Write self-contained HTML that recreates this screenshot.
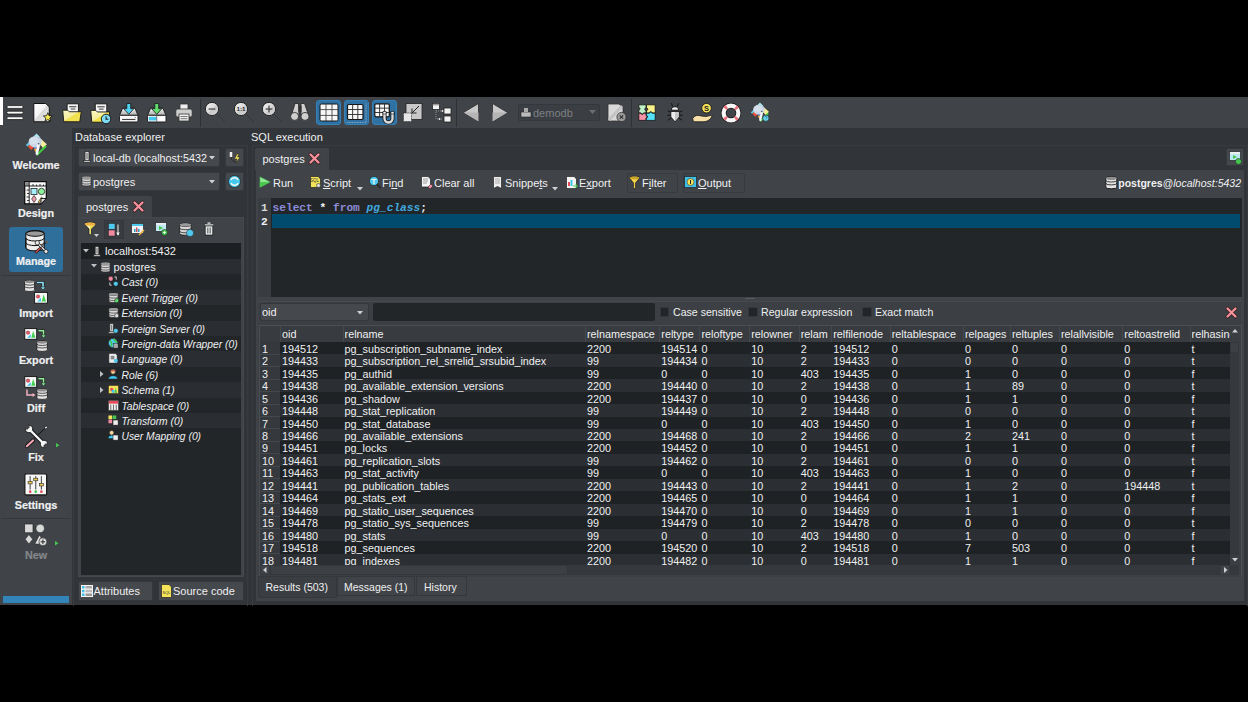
<!DOCTYPE html>
<html><head><meta charset="utf-8">
<style>
*{margin:0;padding:0;box-sizing:border-box}
html,body{width:1248px;height:702px;overflow:hidden;background:#000;font-family:"Liberation Sans",sans-serif;color:#eff0f1}
.abs{position:absolute}
.t{position:absolute;white-space:nowrap}
.c{position:absolute;white-space:nowrap;font-size:10.8px;line-height:12.47px}
.ic{position:absolute;overflow:visible}
.sb{position:absolute;left:0;width:72px;text-align:center;font-weight:bold;font-size:10.8px;line-height:13px;-webkit-text-stroke:0.2px currentColor}
.mono{position:absolute;font-family:"Liberation Mono",monospace;font-weight:bold;font-size:11.2px}
u{text-decoration:underline;text-underline-offset:1px}
</style></head><body>
<div class="abs" style="left:0px;top:97px;width:1248px;height:508px;background:#313438"></div>
<div class="abs" style="left:0px;top:97px;width:1248px;height:31px;background:#404347"></div>
<div class="abs" style="left:0px;top:97px;width:3px;height:28px;background:#fff"></div>
<svg class="ic" style="left:6px;top:104px" width="18" height="16" viewBox="0 0 18 16" ><rect x="0.8" y="1.6" width="16.4" height="2.8" rx="1.4" fill="#fafafa" stroke="#151515" stroke-width="0.8"/><rect x="0.8" y="7.2" width="16.4" height="2.8" rx="1.4" fill="#fafafa" stroke="#151515" stroke-width="0.8"/><rect x="0.8" y="12.8" width="16.4" height="2.8" rx="1.4" fill="#fafafa" stroke="#151515" stroke-width="0.8"/></svg>
<svg class="ic" style="left:33px;top:102.5px" width="20" height="20" viewBox="0 0 20 20" ><defs><linearGradient id="g1" x1="0" y1="0" x2="1" y2="1"><stop offset="0" stop-color="#ffffff"/><stop offset="0.45" stop-color="#f4f4f4"/><stop offset="0.5" stop-color="#d8d8d8"/><stop offset="1" stop-color="#eeeeee"/></linearGradient></defs><path d="M0.8 0.5 H12.8 L16.3 4 V18.8 H0.8 Z" fill="url(#g1)" stroke="#111" stroke-width="1" stroke-linejoin="round"/><path d="M14.80 9.70 L16.03 12.70 L19.27 12.95 L16.80 15.05 L17.56 18.20 L14.80 16.50 L12.04 18.20 L12.80 15.05 L10.33 12.95 L13.57 12.70 Z" fill="#f5ea50" stroke="#111" stroke-width="0.8" stroke-linejoin="round"/></svg>
<svg class="ic" style="left:61.5px;top:102.5px" width="20" height="19.5" viewBox="0 0 19.5 19" ><defs><linearGradient id="g2" x1="0" y1="0" x2="1" y2="1"><stop offset="0" stop-color="#fbf8c8"/><stop offset="0.5" stop-color="#f5ec9a"/><stop offset="0.52" stop-color="#f0e04a"/><stop offset="1" stop-color="#f4e35a"/></linearGradient></defs><rect x="5" y="0.8" width="11" height="9" fill="#f6f6f6" stroke="#1a1a1a" stroke-width="0.9"/><rect x="7" y="3" width="7" height="1.2" fill="#555"/><rect x="8.5" y="5.3" width="4.5" height="1.1" fill="#555"/><path d="M0.7 7 H5.5 L7 8.5 H18.8 L17.3 18.3 H1.7 Z" fill="url(#g2)" stroke="#1a1a1a" stroke-width="0.9" stroke-linejoin="round"/></svg>
<svg class="ic" style="left:89.5px;top:102.5px" width="21" height="20.5" viewBox="0 0 20 19.5" ><defs><linearGradient id="g3" x1="0" y1="0" x2="1" y2="1"><stop offset="0" stop-color="#fbf8c8"/><stop offset="0.5" stop-color="#f5ec9a"/><stop offset="0.52" stop-color="#f0e04a"/><stop offset="1" stop-color="#f4e35a"/></linearGradient></defs><rect x="5" y="0.8" width="11" height="9" fill="#f6f6f6" stroke="#1a1a1a" stroke-width="0.9"/><rect x="7" y="3" width="7" height="1.2" fill="#555"/><rect x="8.5" y="5.3" width="4.5" height="1.1" fill="#555"/><path d="M0.7 7 H5.5 L7 8.5 H18.8 L17.3 18.3 H1.7 Z" fill="url(#g3)" stroke="#1a1a1a" stroke-width="0.9" stroke-linejoin="round"/><circle cx="15.3" cy="15.2" r="4.5" fill="#7fdcf6" stroke="#1a1a1a" stroke-width="0.9"/><path d="M15.3 12.5 V15.5 H17.5" stroke="#1a1a1a" stroke-width="1" fill="none"/></svg>
<svg class="ic" style="left:118.5px;top:102.5px" width="19.5" height="19.5" viewBox="0 0 19 19" ><defs><linearGradient id="g4" x1="0" y1="0" x2="0" y2="1"><stop offset="0" stop-color="#f4f4f4"/><stop offset="1" stop-color="#b0b0b0"/></linearGradient></defs><path d="M3.5 5 H15.5 L18.5 12 H0.5 Z" fill="url(#g4)" stroke="#1a1a1a" stroke-width="0.9" stroke-linejoin="round"/><rect x="0.5" y="12" width="18" height="6.5" rx="1" fill="#f8f8f8" stroke="#1a1a1a" stroke-width="0.9"/><rect x="3" y="15.5" width="13" height="1.1" fill="#444"/><circle cx="15.8" cy="13.8" r="0.5" fill="#444"/><path d="M7.6 0.5 H11.4 V5.5 H14.5 L9.5 11 L4.5 5.5 H7.6 Z" fill="#52d2f2" stroke="#1a1a1a" stroke-width="0.8" stroke-linejoin="round"/></svg>
<svg class="ic" style="left:146.5px;top:102.5px" width="19.5" height="19.5" viewBox="0 0 19 19" ><defs><linearGradient id="g5" x1="0" y1="0" x2="0" y2="1"><stop offset="0" stop-color="#f4f4f4"/><stop offset="1" stop-color="#b0b0b0"/></linearGradient></defs><path d="M3.5 5 H15.5 L18.5 12 H0.5 Z" fill="url(#g5)" stroke="#1a1a1a" stroke-width="0.9" stroke-linejoin="round"/><rect x="0.5" y="12" width="18" height="6.5" rx="1" fill="#f8f8f8" stroke="#1a1a1a" stroke-width="0.9"/><rect x="1.8" y="13.5" width="7.5" height="3.5" fill="#45c8ee"/><rect x="9.8" y="13.5" width="7.5" height="3.5" fill="#fff"/><path d="M9.5 12.5 V18" stroke="#333" stroke-width="0.6"/><path d="M7.6 0.5 H11.4 V5.5 H14.5 L9.5 11 L4.5 5.5 H7.6 Z" fill="#62dc6e" stroke="#1a1a1a" stroke-width="0.8" stroke-linejoin="round"/></svg>
<svg class="ic" style="left:175px;top:103px" width="18" height="19" viewBox="0 0 18 19" ><rect x="5" y="1" width="8" height="6" fill="#eee" stroke="#333" stroke-width="0.8"/><rect x="0.8" y="6" width="16.4" height="8" rx="2" fill="#cfcfcf" stroke="#333" stroke-width="0.8"/><rect x="4" y="11" width="10" height="7" fill="#f0f0f0" stroke="#333" stroke-width="0.8"/><rect x="5.5" y="13" width="7" height="1" fill="#777"/><rect x="5.5" y="15.2" width="7" height="1" fill="#777"/></svg>
<div class="abs" style="left:200px;top:99px;width:1px;height:28px;background:#2f3235"></div>
<svg class="ic" style="left:205.4px;top:102.4px" width="21" height="21" viewBox="0 0 21 21" ><defs><linearGradient id="g6" x1="0" y1="0" x2="1" y2="1"><stop offset="0" stop-color="#f2f2f2"/><stop offset="0.5" stop-color="#dadada"/><stop offset="0.52" stop-color="#c8c8c8"/><stop offset="1" stop-color="#d8d8d8"/></linearGradient></defs><path d="M12 12 L20 20" stroke="#34373a" stroke-width="1"/><circle cx="7" cy="7" r="6.6" fill="url(#g6)" stroke="#1c1c1c" stroke-width="0.9"/><rect x="3.6" y="6.5" width="6.8" height="1.1" fill="#333"/></svg>
<svg class="ic" style="left:233.5px;top:102.4px" width="21" height="21" viewBox="0 0 21 21" ><defs><linearGradient id="g7" x1="0" y1="0" x2="1" y2="1"><stop offset="0" stop-color="#f2f2f2"/><stop offset="0.5" stop-color="#dadada"/><stop offset="0.52" stop-color="#c8c8c8"/><stop offset="1" stop-color="#d8d8d8"/></linearGradient></defs><path d="M12 12 L20 20" stroke="#34373a" stroke-width="1"/><circle cx="7" cy="7" r="6.6" fill="url(#g7)" stroke="#1c1c1c" stroke-width="0.9"/><text x="7" y="9.2" font-family="Liberation Sans" font-weight="bold" font-size="6.2" text-anchor="middle" fill="#2a2a2a">1:1</text></svg>
<svg class="ic" style="left:261.7px;top:102.4px" width="21" height="21" viewBox="0 0 21 21" ><defs><linearGradient id="g8" x1="0" y1="0" x2="1" y2="1"><stop offset="0" stop-color="#f2f2f2"/><stop offset="0.5" stop-color="#dadada"/><stop offset="0.52" stop-color="#c8c8c8"/><stop offset="1" stop-color="#d8d8d8"/></linearGradient></defs><path d="M12 12 L20 20" stroke="#34373a" stroke-width="1"/><circle cx="7" cy="7" r="6.6" fill="url(#g8)" stroke="#1c1c1c" stroke-width="0.9"/><rect x="3.6" y="6.5" width="6.8" height="1.1" fill="#333"/><rect x="6.45" y="3.6" width="1.1" height="6.8" fill="#333"/></svg>
<svg class="ic" style="left:290px;top:103px" width="20" height="18" viewBox="0 0 20 18" ><path d="M5 0.5 L8.5 0.5 L9 12 L1.5 12 Z" fill="#cfcfcf" stroke="#222" stroke-width="0.8"/><path d="M11 0.5 L14.5 0.5 L18.5 12 L11 12 Z" fill="#cfcfcf" stroke="#222" stroke-width="0.8"/><rect x="8.5" y="3" width="3" height="6" fill="#333"/><circle cx="4.6" cy="13.4" r="4" fill="#cfcfcf" stroke="#222" stroke-width="0.8"/><circle cx="15" cy="13.4" r="4" fill="#cfcfcf" stroke="#222" stroke-width="0.8"/></svg>
<div class="abs" style="left:316px;top:100px;width:25px;height:25px;background:#2e71a2;border:1px solid #3580b6;border-radius:3px"></div>
<div class="abs" style="left:344px;top:100px;width:25px;height:25px;background:#2e71a2;border:1px solid #3580b6;border-radius:3px"></div>
<div class="abs" style="left:372px;top:100px;width:25px;height:25px;background:#2e71a2;border:1px solid #3580b6;border-radius:3px"></div>
<svg class="ic" style="left:318.5px;top:102.5px" width="20" height="19" viewBox="0 0 20 19" ><rect x="1" y="1" width="18" height="17" rx="1.5" fill="#f7f7f7" stroke="#141414" stroke-width="1"/><rect x="6.60" y="1" width="0.8" height="17" fill="#333"/><rect x="1" y="6.27" width="18" height="0.8" fill="#333"/><rect x="12.60" y="1" width="0.8" height="17" fill="#333"/><rect x="1" y="11.93" width="18" height="0.8" fill="#333"/></svg>
<svg class="ic" style="left:346px;top:102.5px" width="21" height="20.5" viewBox="0 0 21 20.5" ><path d="M20 0.5 V19.5 H0.5" fill="none" stroke="#e8e8e8" stroke-width="0.6" stroke-dasharray="0.8 0.8"/><rect x="1.5" y="1.5" width="15.5" height="15" rx="1.2" fill="#f7f7f7" stroke="#141414" stroke-width="1.2"/><rect x="6.22" y="1.5" width="0.9" height="15" fill="#2a2a2a"/><rect x="1.5" y="6.05" width="15.5" height="0.9" fill="#2a2a2a"/><rect x="11.38" y="1.5" width="0.9" height="15" fill="#2a2a2a"/><rect x="1.5" y="11.05" width="15.5" height="0.9" fill="#2a2a2a"/></svg>
<svg class="ic" style="left:374px;top:102.5px" width="21" height="20.5" viewBox="0 0 21 20.5" ><rect x="0.8" y="0.8" width="14.5" height="13" rx="1.2" fill="#f7f7f7" stroke="#141414" stroke-width="1.2"/><rect x="5.18" y="0.8" width="0.9" height="13" fill="#2a2a2a"/><rect x="0.8" y="4.68" width="14.5" height="0.9" fill="#2a2a2a"/><rect x="10.02" y="0.8" width="0.9" height="13" fill="#2a2a2a"/><rect x="0.8" y="9.02" width="14.5" height="0.9" fill="#2a2a2a"/><path d="M10.5 9 V15.5 A4 4 0 0 0 18.5 15.5 V9" fill="none" stroke="#141414" stroke-width="4"/><path d="M10.5 9 V15.5 A4 4 0 0 0 18.5 15.5 V9" fill="none" stroke="#dcdcdc" stroke-width="2.4"/><rect x="9" y="8.5" width="3" height="2.5" fill="#f4f4f4" stroke="#141414" stroke-width="0.6"/><rect x="17" y="8.5" width="3" height="2.5" fill="#f4f4f4" stroke="#141414" stroke-width="0.6"/></svg>
<svg class="ic" style="left:403px;top:103px" width="20" height="19" viewBox="0 0 20 19" ><rect x="3" y="0.5" width="16" height="16" fill="#c8c8c8" stroke="#222" stroke-width="0.8"/><path d="M16 3 L9 10 M9 5.5 V10 H13.5" stroke="#222" stroke-width="1" fill="none"/><rect x="0.5" y="10" width="8" height="8.5" fill="#e8e8e8" stroke="#333" stroke-width="0.8" stroke-dasharray="1 0.6"/></svg>
<svg class="ic" style="left:432px;top:103px" width="20" height="20" viewBox="0 0 20 20" ><rect x="0.5" y="0.5" width="7" height="6" fill="#f2f2f2" stroke="#222" stroke-width="0.8"/><rect x="0.8" y="0.8" width="6.4" height="1.6" fill="#999"/><rect x="12" y="5" width="7" height="6" fill="#f2f2f2" stroke="#222" stroke-width="0.8"/><rect x="12" y="13" width="7" height="6" fill="#f2f2f2" stroke="#222" stroke-width="0.8"/><path d="M4 7 V16 H10 M4 8 H10" stroke="#bbb" stroke-width="0.6" fill="none" stroke-dasharray="1 1"/><circle cx="10.5" cy="8" r="0.9" fill="#eee"/><circle cx="7.5" cy="16" r="0.9" fill="#eee"/></svg>
<div class="abs" style="left:456px;top:99px;width:1px;height:28px;background:#2f3235"></div>
<svg class="ic" style="left:463px;top:103px" width="16" height="19" viewBox="0 0 16 19" ><path d="M0.5 9.5 L15.5 0.5 V18.5 Z" fill="#c9c9c9" stroke="#2a2a2a" stroke-width="0.8"/><path d="M0.5 9.5 H15.5 V18.5 Z" fill="#b5b5b5"/></svg>
<svg class="ic" style="left:492px;top:103px" width="16" height="19" viewBox="0 0 16 19" ><path d="M15.5 9.5 L0.5 0.5 V18.5 Z" fill="#c9c9c9" stroke="#2a2a2a" stroke-width="0.8"/><path d="M15.5 9.5 H0.5 V18.5 Z" fill="#b5b5b5"/></svg>
<div class="abs" style="left:518px;top:104px;width:82px;height:17px;background:#3b3e42;border:1px solid #34373b;border-radius:2px"></div>
<svg class="ic" style="left:520px;top:107px" width="12" height="11" viewBox="0 0 12 11" ><rect x="1" y="5" width="10" height="5" fill="#bbb" stroke="#222" stroke-width="0.6"/><path d="M4 1 H8 V5 H4 Z" fill="#aaa"/></svg>
<div class="t" style="left:533px;top:104.5px;color:#7d8085;font-size:11px;line-height:16px">demodb</div>
<svg class="ic" style="left:589px;top:110px" width="7" height="4" viewBox="0 0 7 4" ><path d="M0 0 H7 L3.5 4 Z" fill="#6a6d71"/></svg>
<svg class="ic" style="left:607px;top:103px" width="20" height="19" viewBox="0 0 20 19" ><path d="M1 1 H12 L16 5 V18 H1 Z" fill="#d9d9d9" stroke="#333" stroke-width="0.8"/><path d="M2 17 L15 3" stroke="#c3c3c3" stroke-width="3"/><circle cx="14.5" cy="14" r="4.6" fill="#9a9a9a" stroke="#333" stroke-width="0.8"/><path d="M12.8 12.3 L16.2 15.7 M16.2 12.3 L12.8 15.7" stroke="#333" stroke-width="1.1"/></svg>
<div class="abs" style="left:631px;top:99px;width:1px;height:28px;background:#2f3235"></div>
<svg class="ic" style="left:637.7px;top:103.6px" width="18" height="17" viewBox="0 0 18 17" ><path d="M0.8 0.8 H8 V4 C6.3 4 6.3 6.5 8 6.5 V9 H5.5 C5.5 10.6 3 10.6 3 9 H0.8 V6 C2.4 6 2.4 3.5 0.8 3.5 Z" fill="#bff2c6" stroke="#111" stroke-width="0.8" stroke-linejoin="round"/><path d="M8.5 0.8 H17.2 V9 H14 C14 7.4 11.5 7.4 11.5 9 H8.5 V6.5 C10.2 6.5 10.2 4 8.5 4 Z" fill="#f8f08a" stroke="#111" stroke-width="0.8" stroke-linejoin="round"/><path d="M0.8 9.2 H3 C3 10.8 5.5 10.8 5.5 9.2 H8 V11.5 C9.7 11.5 9.7 14 8 14 V16.4 H0.8 Z" fill="#f594a6" stroke="#111" stroke-width="0.8" stroke-linejoin="round"/><path d="M8.3 9.2 H11.5 C11.5 7.6 14 7.6 14 9.2 H17.2 V16.4 H8.3 V14 C10 14 10 11.5 8.3 11.5 Z" fill="#55e2f8" stroke="#111" stroke-width="0.8" stroke-linejoin="round"/></svg>
<svg class="ic" style="left:667px;top:102.8px" width="16" height="19" viewBox="0 0 16 19" ><path d="M5.5 3.5 L4.5 0.3 M10.5 3.5 L11.5 0.3 M4 9.5 L0.8 7.8 M4 12.3 L0.5 12.3 M4.2 15 L1 17.2 M12 9.5 L15.2 7.8 M12 12.3 L15.5 12.3 M11.8 15 L15 17.2" stroke="#111" stroke-width="1"/><path d="M4.3 7.2 C4.3 2.6 11.7 2.6 11.7 7.2 Z" fill="#f2f2f2" stroke="#111" stroke-width="0.9"/><path d="M3.8 8.4 H12.2 V14 L8 18.8 L3.8 14 Z" fill="#ececec" stroke="#111" stroke-width="0.9" stroke-linejoin="round"/><path d="M8 8.9 H11.7 V13.8 L8 18" fill="#c4c4c4"/></svg>
<svg class="ic" style="left:692px;top:103px" width="21" height="19.5" viewBox="0 0 20.5 19.5" ><circle cx="14.3" cy="5.2" r="4.8" fill="#f4e35a" stroke="#1a1a1a" stroke-width="0.9"/><text x="14.3" y="8" font-family="Liberation Sans" font-weight="bold" font-size="7.5" text-anchor="middle" fill="#222">S</text><path d="M0.5 15.5 C2.5 12 6 12 9 13 L13.5 13.5 C15.5 13.5 18 12 19.8 12.8 C19 16 15.5 18.8 10.5 18.8 H2.5 C1.5 18.8 0.5 17.5 0.5 15.5 Z" fill="#f8dfa8" stroke="#1a1a1a" stroke-width="0.8"/></svg>
<svg class="ic" style="left:721px;top:102.5px" width="20" height="20" viewBox="0 0 20 20" ><circle cx="10" cy="10" r="7.4" fill="none" stroke="#141414" stroke-width="5.6"/><circle cx="10" cy="10" r="7.4" fill="none" stroke="#f7f7f7" stroke-width="4.2"/><circle cx="10" cy="10" r="7.4" fill="none" stroke="#e8707c" stroke-width="4.2" stroke-dasharray="2.6 9.02" stroke-dashoffset="-4.51"/></svg>
<svg class="ic" style="left:749.8px;top:102.3px" width="19.5" height="19.7" viewBox="0 0 22.5 22.5" ><path d="M11.5 0.6 L15.5 4.5 H7.5 Z" fill="#a8e8f2"/><path d="M5.5 7.5 L0.8 12 L2.6 13.5 L7 9.5 Z" fill="#5ccbe8"/><path d="M16 6 L21.8 11.2 L18.5 15.5 L15.5 12 Z" fill="#f6ee9a"/><path d="M14.5 4.5 L17 7 L15 9 Z" fill="#c8d8f4"/><path d="M2.8 13.2 L6.5 10 L9.5 13.8 L6 17 Z" fill="#ee5038"/><path d="M8.3 13 L12.2 12.4 L12.4 15.4 L9 15.8 Z" fill="#3a7ae6"/><path d="M9 15.8 L13 15.2 L12.2 19.2 L10 18.4 Z" fill="#f2a22e"/><path d="M11.6 22.2 L21 13" stroke="#3ed03a" stroke-width="1.9"/><ellipse cx="10.2" cy="8.8" rx="6.6" ry="5.6" fill="#cad5e5"/><ellipse cx="9" cy="7.8" rx="4.5" ry="3.5" fill="#d6dfec"/><path d="M13.3 12.5 C14 15.5 11.5 17 12 20.5" stroke="#f4f6fa" stroke-width="2.8" fill="none" stroke-linecap="round"/><circle cx="13.6" cy="10.8" r="0.8" fill="#555"/><circle cx="18.3" cy="18.6" r="3.6" fill="#6ad8f4" stroke="#1a1a1a" stroke-width="0.7"/><path d="M17 17.5 C17 16 19.6 16 19.6 17.5 C19.6 18.5 18.3 18.5 18.3 19.8" stroke="#1a6a8a" stroke-width="0.8" fill="none"/></svg>
<div class="abs" style="left:0px;top:128px;width:72px;height:477px;background:#404347"></div>
<div class="abs" style="left:9px;top:226.5px;width:53.5px;height:45px;background:#2f6f9b;border-radius:3px"></div>
<svg class="ic" style="left:24.5px;top:132.8px" width="23" height="23" viewBox="0 0 23 23" ><path d="M11.5 0.6 L15.5 4.5 H7.5 Z" fill="#a8e8f2"/><path d="M5.5 7.5 L0.8 12 L2.6 13.5 L7 9.5 Z" fill="#5ccbe8"/><path d="M16 6 L21.8 11.2 L18.5 15.5 L15.5 12 Z" fill="#f6ee9a"/><path d="M14.5 4.5 L17 7 L15 9 Z" fill="#c8d8f4"/><path d="M2.8 13.2 L6.5 10 L9.5 13.8 L6 17 Z" fill="#ee5038"/><path d="M8.3 13 L12.2 12.4 L12.4 15.4 L9 15.8 Z" fill="#3a7ae6"/><path d="M9 15.8 L13 15.2 L12.2 19.2 L10 18.4 Z" fill="#f2a22e"/><path d="M11.6 22.2 L21 13" stroke="#3ed03a" stroke-width="1.9"/><ellipse cx="10.2" cy="8.8" rx="6.6" ry="5.6" fill="#cad5e5"/><ellipse cx="9" cy="7.8" rx="4.5" ry="3.5" fill="#d6dfec"/><path d="M13.3 12.5 C14 15.5 11.5 17 12 20.5" stroke="#f4f6fa" stroke-width="2.8" fill="none" stroke-linecap="round"/><circle cx="13.6" cy="10.8" r="0.8" fill="#555"/></svg>
<div class="sb" style="top:158.6px;color:#eff0f1">Welcome</div>
<svg class="ic" style="left:24.3px;top:181px" width="23" height="23.5" viewBox="0 0 23 23.5" ><path d="M0.7 0.7 H22.3 V17 L17 22.8 H0.7 Z" fill="#fafafa" stroke="#111" stroke-width="1.3"/><rect x="1.2" y="1.2" width="4" height="3.8" fill="#8a8a8a"/><path d="M0.7 5 H22.3 M5.2 0.7 V22.8" stroke="#111" stroke-width="0.9"/><path d="M9 3 V5 M12.5 3.5 V5 M16 3 V5 M19.5 3.5 V5 M2.5 9 H5.2 M3 12.5 H5.2 M2.5 16 H5.2 M3 19.5 H5.2" stroke="#111" stroke-width="0.8"/><rect x="7" y="7.5" width="6" height="6" fill="#a6eefa" stroke="#222" stroke-width="0.8"/><circle cx="17.5" cy="10.5" r="3.2" fill="#8ef09a" stroke="#222" stroke-width="0.8"/><path d="M10 14.5 L12.3 18 L10 21.5 L7.7 18 Z" fill="#f2a0b0" stroke="#222" stroke-width="0.7"/><path d="M14 21.5 L17.5 16 L18.5 16.8 L15.5 22 Z" fill="#f0d040" stroke="#222" stroke-width="0.6"/><path d="M17 22.8 V17.5 H22.3 Z" fill="#dddddd" stroke="#111" stroke-width="0.9" stroke-linejoin="round"/></svg>
<div class="sb" style="top:207px;color:#eff0f1">Design</div>
<svg class="ic" style="left:24.5px;top:229.5px" width="23" height="23" viewBox="0 0 23 23" ><path d="M0.8 3.6 A9.2 3 0 0 1 19.2 3.6 V17.8 A9.2 3 0 0 1 0.8 17.8 Z" fill="#efefef" stroke="#111" stroke-width="1.1"/><ellipse cx="10" cy="3.6" rx="8.9" ry="2.7" fill="#9a9a9a" stroke="#111" stroke-width="1"/><path d="M0.8 8 A9.2 3 0 0 0 19.2 8 M0.8 12.6 A9.2 3 0 0 0 19.2 12.6" fill="none" stroke="#111" stroke-width="1"/><path d="M0.8 8 V17.8" stroke="#111" stroke-width="1.1"/><path d="M13 13.5 L20.5 21" stroke="#111" stroke-width="2.6"/><path d="M13 13.5 L20.5 21" stroke="#e8e8e8" stroke-width="1.4"/><circle cx="12.3" cy="12.8" r="2.2" fill="#e8e8e8" stroke="#111" stroke-width="0.7"/><circle cx="21" cy="21.5" r="2" fill="#e8e8e8" stroke="#111" stroke-width="0.7"/><path d="M15 18.5 L21.5 12" stroke="#111" stroke-width="0.8"/><circle cx="21.6" cy="11.8" r="1" fill="#8a5a3a"/><path d="M11 22 L15 18.5" stroke="#111" stroke-width="2.6" stroke-linecap="round"/><path d="M11 22 L15 18.5" stroke="#e05050" stroke-width="1.4" stroke-linecap="round"/></svg>
<div class="sb" style="top:255.2px;color:#eff0f1">Manage</div>
<div class="abs" style="left:1px;top:275px;width:70px;height:1px;background:#35383b"></div>
<svg class="ic" style="left:24px;top:280px" width="24" height="24" viewBox="0 0 24 24" ><path d="M0.6 1.868 A5.0 1.568 0 0 1 10.6 1.868 V9.932 A5.0 1.568 0 0 1 0.6 9.932 Z" fill="#e4e4e4" stroke="#151515" stroke-width="0.8"/><ellipse cx="5.6" cy="1.868" rx="4.7" ry="1.368" fill="#8e8e8e"/><path d="M0.6 3.6152 A5.0 1.568 0 0 0 10.6 3.6152" fill="none" stroke="#151515" stroke-width="0.7200000000000001"/><path d="M0.6 6.3032 A5.0 1.568 0 0 0 10.6 6.3032" fill="none" stroke="#151515" stroke-width="0.7200000000000001"/><path d="M13 2.5 H19 V7.5" fill="none" stroke="#151515" stroke-width="2.8"/><path d="M13 2.5 H19 V7.5" fill="none" stroke="#8ae4f6" stroke-width="1.6"/><path d="M16.5 7.0 L19 10.0 L21.5 7.0 Z" fill="#8ae4f6" stroke="#151515" stroke-width="0.5"/><rect x="10.6" y="12.4" width="12.8" height="10.8" fill="#f8f8f8" stroke="#111" stroke-width="0.9"/><circle cx="14.056000000000001" cy="16.504" r="1.8360000000000003" fill="#f05565" stroke="#333" stroke-width="0.3"/><path d="M13.16 21.58 L17.0 17.8 V21.58 Z" fill="#3fc6ee"/><path d="M17.64 21.58 L19.56 14.56 L22.12 21.58 Z" fill="#45d04f"/></svg>
<div class="sb" style="top:306.5px;color:#eff0f1">Import</div>
<svg class="ic" style="left:24px;top:328px" width="24" height="24" viewBox="0 0 24 24" ><rect x="0.8" y="0.6" width="11.9" height="10.7" fill="#f8f8f8" stroke="#111" stroke-width="0.9"/><circle cx="4.013000000000001" cy="4.6659999999999995" r="1.819" fill="#f05565" stroke="#333" stroke-width="0.3"/><path d="M3.1800000000000006 9.694999999999999 L6.75 5.949999999999999 V9.694999999999999 Z" fill="#3fc6ee"/><path d="M7.345000000000001 9.694999999999999 L9.13 2.74 L11.510000000000002 9.694999999999999 Z" fill="#45d04f"/><path d="M14.5 2.8 H19.5 V7.5" fill="none" stroke="#151515" stroke-width="2.8"/><path d="M14.5 2.8 H19.5 V7.5" fill="none" stroke="#8ef09a" stroke-width="1.6"/><path d="M17.0 7.0 L19.5 10.0 L22.0 7.0 Z" fill="#8ef09a" stroke="#151515" stroke-width="0.5"/><path d="M12.9 14.370000000000001 A5.25 1.4700000000000002 0 0 1 23.4 14.370000000000001 V21.93 A5.25 1.4700000000000002 0 0 1 12.9 21.93 Z" fill="#e4e4e4" stroke="#151515" stroke-width="0.8"/><ellipse cx="18.15" cy="14.370000000000001" rx="4.95" ry="1.2700000000000002" fill="#8e8e8e"/><path d="M12.9 16.008 A5.25 1.4700000000000002 0 0 0 23.4 16.008" fill="none" stroke="#151515" stroke-width="0.7200000000000001"/><path d="M12.9 18.528 A5.25 1.4700000000000002 0 0 0 23.4 18.528" fill="none" stroke="#151515" stroke-width="0.7200000000000001"/></svg>
<div class="sb" style="top:354px;color:#eff0f1">Export</div>
<svg class="ic" style="left:24px;top:376px" width="24" height="24" viewBox="0 0 24 24" ><rect x="0.8" y="0.6" width="11.9" height="10.7" fill="#f8f8f8" stroke="#111" stroke-width="0.9"/><circle cx="4.013000000000001" cy="4.6659999999999995" r="1.819" fill="#f05565" stroke="#333" stroke-width="0.3"/><path d="M3.1800000000000006 9.694999999999999 L6.75 5.949999999999999 V9.694999999999999 Z" fill="#3fc6ee"/><path d="M7.345000000000001 9.694999999999999 L9.13 2.74 L11.510000000000002 9.694999999999999 Z" fill="#45d04f"/><path d="M14.5 2.8 H19.5 V7.5" fill="none" stroke="#151515" stroke-width="2.8"/><path d="M14.5 2.8 H19.5 V7.5" fill="none" stroke="#8ef09a" stroke-width="1.6"/><path d="M17.0 7.0 L19.5 10.0 L22.0 7.0 Z" fill="#8ef09a" stroke="#151515" stroke-width="0.5"/><path d="M12.9 14.197999999999999 A5.25 1.498 0 0 1 23.4 14.197999999999999 V21.901999999999997 A5.25 1.498 0 0 1 12.9 21.901999999999997 Z" fill="#e4e4e4" stroke="#151515" stroke-width="0.8"/><ellipse cx="18.15" cy="14.197999999999999" rx="4.95" ry="1.298" fill="#8e8e8e"/><path d="M12.9 15.867199999999999 A5.25 1.498 0 0 0 23.4 15.867199999999999" fill="none" stroke="#151515" stroke-width="0.7200000000000001"/><path d="M12.9 18.435199999999995 A5.25 1.498 0 0 0 23.4 18.435199999999995" fill="none" stroke="#151515" stroke-width="0.7200000000000001"/><path d="M3 13.5 V19 H9" fill="none" stroke="#f4b0c0" stroke-width="1.5"/><path d="M8.5 17 L11.5 19 L8.5 21 Z" fill="#f4b0c0"/></svg>
<div class="sb" style="top:402.3px;color:#eff0f1">Diff</div>
<svg class="ic" style="left:24.5px;top:424.5px" width="23" height="23" viewBox="0 0 23 23" ><path d="M21 2.5 L8 14.5" stroke="#111" stroke-width="1"/><ellipse cx="21" cy="2.5" rx="1.6" ry="1.1" transform="rotate(-40 21 2.5)" fill="#f4f4f4" stroke="#111" stroke-width="0.7"/><path d="M1.8 21.2 L8 15.5" stroke="#111" stroke-width="3.8" stroke-linecap="round"/><path d="M1.8 21.2 L8 15.5" stroke="#f4a8b8" stroke-width="2.2" stroke-linecap="round"/><path d="M5 5 L18 18" stroke="#111" stroke-width="4"/><circle cx="4" cy="4" r="3.8" fill="#f6f6f6" stroke="#111" stroke-width="0.9"/><circle cx="19" cy="19" r="3.8" fill="#f6f6f6" stroke="#111" stroke-width="0.9"/><path d="M5 5 L18 18" stroke="#f6f6f6" stroke-width="2.4"/><path d="M0 3 L3 0 L5 2 L2 5 Z" fill="#404347"/><path d="M23 20 L20 23 L18 21 L21 18 Z" fill="#404347"/></svg>
<svg class="ic" style="left:55.5px;top:442.5px" width="3.5" height="4.5" viewBox="0 0 3.5 4.5" ><path d="M0 0 L3.5 2.25 L0 4.5 Z" fill="#45c64f"/></svg>
<div class="sb" style="top:450.5px;color:#eff0f1">Fix</div>
<svg class="ic" style="left:24px;top:473.3px" width="23.5" height="22.8" viewBox="0 0 23 22" preserveAspectRatio="none"><rect x="0.8" y="0.8" width="21.4" height="20.4" rx="1.5" fill="#f7f7f7" stroke="#1e1e1e" stroke-width="1.3"/><path d="M6 3 V16 M11.5 3 V16 M17 3 V16" stroke="#333" stroke-width="0.9"/><rect x="4" y="8" width="4" height="2.5" fill="#e8c84a" stroke="#333" stroke-width="0.6"/><rect x="9.5" y="5" width="4" height="2.5" fill="#e8c84a" stroke="#333" stroke-width="0.6"/><rect x="15" y="10" width="4" height="2.5" fill="#e8c84a" stroke="#333" stroke-width="0.6"/><circle cx="6" cy="18" r="1.3" fill="#e84a5a"/><circle cx="11.5" cy="18" r="1.3" fill="#45c64f"/><circle cx="17" cy="18" r="1.3" fill="#e84a5a"/></svg>
<div class="sb" style="top:498.5px;color:#eff0f1">Settings</div>
<div class="abs" style="left:1px;top:518px;width:70px;height:1px;background:#35383b"></div>
<svg class="ic" style="left:24px;top:523px" width="23" height="23" viewBox="0 0 23 23" ><rect x="0.7" y="1" width="8.3" height="8.8" fill="#d9d9d9" stroke="#26282b" stroke-width="0.7"/><circle cx="16.2" cy="5.4" r="4.3" fill="#d9d9d9" stroke="#26282b" stroke-width="0.7"/><path d="M4.9 11.5 L8.7 16.3 L4.9 21 L1.2 16.3 Z" fill="#d9d9d9" stroke="#26282b" stroke-width="0.6"/><path d="M10.8 21 L15.5 12 L19 18 L17 21 Z" fill="#e6e6e6" stroke="#26282b" stroke-width="0.6"/><circle cx="18.9" cy="18.8" r="4" fill="#dedede" stroke="#26282b" stroke-width="0.7"/><path d="M16.6 18.8 H21.2 M18.9 16.5 V21.1" stroke="#2a2a2a" stroke-width="1"/></svg>
<svg class="ic" style="left:55px;top:541px" width="4" height="4.6" viewBox="0 0 4 4.6" ><path d="M0 0 L3.5 2.25 L0 4.5 Z" fill="#45c64f"/></svg>
<div class="sb" style="top:549px;color:#85888c">New</div>
<div class="abs" style="left:3px;top:596px;width:66px;height:6.5px;background:#3385b9"></div>
<div class="t" style="left:75px;top:130.5px;font-size:11px">Database explorer</div>
<div class="abs" style="left:78px;top:148px;width:142px;height:19px;background:#45484c;border:1px solid #36393d;border-radius:2px"></div>
<svg class="ic" style="left:83px;top:151px" width="8" height="12" viewBox="0 0 8 12" ><rect x="2" y="0.5" width="4" height="10" fill="#d9d9d9" stroke="#222" stroke-width="0.7"/><rect x="0.5" y="9.5" width="7" height="2" fill="#bdbdbd" stroke="#222" stroke-width="0.7"/><rect x="3.4" y="2" width="1.2" height="6" fill="#777"/></svg>
<div class="t" style="left:93px;top:149.5px;font-size:10.8px;line-height:16px;width:115px;overflow:hidden">local-db (localhost:5432</div>
<svg class="ic" style="left:209px;top:156px" width="6" height="3.5" viewBox="0 0 6 3.5" ><path d="M0 0 H6 L3 3.5 Z" fill="#cfd0d1"/></svg>
<div class="abs" style="left:225px;top:148px;width:19px;height:19px;background:#45484c;border:1px solid #36393d;border-radius:2px"></div>
<svg class="ic" style="left:228px;top:151px" width="13" height="13" viewBox="0 0 13 13" ><path d="M3 1 V6" stroke="#eee" stroke-width="2.5"/><path d="M3 6 C3 11 8 10 9 12" stroke="#222" stroke-width="0.8" fill="none"/><path d="M9 3 L6.5 8 H9 L8 12 L12 6 H9.5 L11 3 Z" fill="#f4e35a" stroke="#222" stroke-width="0.5"/></svg>
<div class="abs" style="left:78px;top:172px;width:142px;height:19px;background:#45484c;border:1px solid #36393d;border-radius:2px"></div>
<svg class="ic" style="left:81px;top:175px" width="11" height="12" viewBox="0 0 12 12" ><path d="M1 2.5 C1 0.5 11 0.5 11 2.5 V10 C11 12 1 12 1 10 Z" fill="#d8d8d8" stroke="#222" stroke-width="0.8"/><path d="M1 2.5 C1 4.3 11 4.3 11 2.5 M1 5.3 C1 7.1 11 7.1 11 5.3 M1 8 C1 9.8 11 9.8 11 8" stroke="#222" stroke-width="0.7" fill="none"/><ellipse cx="6" cy="2.4" rx="5" ry="1.3" fill="#9a9a9a"/></svg>
<div class="t" style="left:93px;top:173.5px;font-size:11px;line-height:16px">postgres</div>
<svg class="ic" style="left:209px;top:180px" width="6" height="3.5" viewBox="0 0 6 3.5" ><path d="M0 0 H6 L3 3.5 Z" fill="#cfd0d1"/></svg>
<div class="abs" style="left:225px;top:172px;width:19px;height:19px;background:#45484c;border:1px solid #36393d;border-radius:2px"></div>
<svg class="ic" style="left:228px;top:174.5px" width="13" height="13" viewBox="0 0 13 13" ><circle cx="6.5" cy="6.5" r="6" fill="#45c8ee" stroke="#1e1e1e" stroke-width="0.7"/><path d="M3 5 C4 2 9 2 10 5 M10 8 C9 11 4 11 3 8" stroke="#f4f4f4" stroke-width="1.3" fill="none"/></svg>
<div class="abs" style="left:78px;top:195.5px;width:74px;height:22px;background:#404347;border-radius:2px 2px 0 0"></div>
<div class="t" style="left:86px;top:198.9px;font-size:11px;line-height:16px">postgres</div>
<svg class="ic" style="left:132.5px;top:201px" width="11" height="11" viewBox="0 0 11 11" ><path d="M1.5 1.5 L9.5 9.5 M9.5 1.5 L1.5 9.5" stroke="#2a1a1c" stroke-width="3.6" stroke-linecap="round"/><path d="M1.5 1.5 L9.5 9.5 M9.5 1.5 L1.5 9.5" stroke="#f6909a" stroke-width="2.4" stroke-linecap="round"/></svg>
<div class="abs" style="left:78px;top:217px;width:166px;height:360px;background:#404347;border:1px solid #45484c"></div>
<svg class="ic" style="left:84px;top:222px" width="12" height="13" viewBox="0 0 12 13" ><path d="M0.5 2 C0.5 -0.5 11.5 -0.5 11.5 2 L7 7 V12.3 H5 V7 Z" fill="#f8f0a0" stroke="#1a1a1a" stroke-width="0.7"/><path d="M6 2.5 H11.5 L7 7 V12.3 H6 Z" fill="#f0e060"/><ellipse cx="6" cy="2" rx="5.2" ry="1.5" fill="#f0b040"/></svg>
<svg class="ic" style="left:94px;top:234px" width="5" height="3" viewBox="0 0 5 3" ><path d="M0 0 H5 L2.5 3 Z" fill="#cfd0d1"/></svg>
<div class="abs" style="left:104px;top:219.5px;width:19.5px;height:19px;background:#383b3f;border:1px solid #34373b"></div>
<svg class="ic" style="left:107.5px;top:222.5px" width="13" height="14" viewBox="0 0 13 14" ><rect x="0.5" y="0.5" width="6.5" height="5.8" fill="#4fc9ee" stroke="#222" stroke-width="0.5"/><rect x="0.5" y="7" width="6.5" height="6" fill="#f08aa0" stroke="#222" stroke-width="0.5"/><path d="M10 1.5 V12" stroke="#f4f4f4" stroke-width="1"/><path d="M8.3 9.5 L10 12.8 L11.7 9.5 Z" fill="#f4f4f4"/></svg>
<svg class="ic" style="left:130.5px;top:222.5px" width="14" height="13" viewBox="0 0 14 13" ><rect x="0.5" y="0.5" width="12" height="10" fill="#f4f4f4" stroke="#222" stroke-width="0.7"/><rect x="1" y="1" width="11" height="2" fill="#4fc9ee"/><rect x="3" y="6" width="1.5" height="3" fill="#2a9ac0"/><rect x="5" y="4.5" width="1.5" height="4.5" fill="#c85060"/><rect x="7" y="6" width="1.5" height="3" fill="#2a9ac0"/><path d="M8 12 L13 7" stroke="#f0b040" stroke-width="1.6"/></svg>
<svg class="ic" style="left:154.5px;top:222px" width="13" height="14" viewBox="0 0 13 14" ><rect x="0.5" y="0.5" width="11" height="9" fill="#bfe8f5" stroke="#222" stroke-width="0.7"/><rect x="1" y="1" width="10" height="1.8" fill="#eee"/><path d="M4 4 L8 6 L4 8 Z" fill="#45c64f"/><circle cx="9.5" cy="10.5" r="3" fill="#45c64f" stroke="#222" stroke-width="0.6"/><path d="M8 10.5 H11 M9.5 9 V12" stroke="#fff" stroke-width="0.8"/></svg>
<svg class="ic" style="left:178px;top:222px" width="16" height="15" viewBox="0 0 13 13" ><path d="M1 2.5 C1 0.5 11 0.5 11 2.5 V10 C11 12 1 12 1 10 Z" fill="#d8d8d8" stroke="#222" stroke-width="0.8"/><path d="M1 2.5 C1 4.3 11 4.3 11 2.5 M1 5.3 C1 7.1 11 7.1 11 5.3 M1 8 C1 9.8 11 9.8 11 8" stroke="#222" stroke-width="0.7" fill="none"/><ellipse cx="6" cy="2.4" rx="5" ry="1.3" fill="#9a9a9a"/></svg>
<svg class="ic" style="left:186px;top:229px" width="8" height="8" viewBox="0 0 8 8" ><circle cx="4" cy="4" r="3.6" fill="#4fc9ee" stroke="#222" stroke-width="0.5"/></svg>
<svg class="ic" style="left:203.5px;top:222px" width="10" height="13.5" viewBox="0 0 10 13.5" ><rect x="0.5" y="2" width="9" height="2" fill="#ddd" stroke="#222" stroke-width="0.5"/><rect x="3.5" y="0.3" width="3" height="1.7" fill="#bbb"/><rect x="1.2" y="4" width="7.6" height="9" fill="#f2f6f8" stroke="#151515" stroke-width="0.7"/><path d="M3.4 5.5 V11.5 M5 5.5 V11.5 M6.6 5.5 V11.5" stroke="#555" stroke-width="0.8"/></svg>
<div class="abs" style="left:81px;top:243px;width:160px;height:332px;background:#232629"></div>
<div class="abs" style="left:81px;top:243.4px;width:160px;height:15.42px;background:#1d2023"></div>
<svg class="ic" style="left:82.5px;top:248.9px" width="6" height="3.5" viewBox="0 0 6 3.5" ><path d="M0 0 H6 L3 3.5 Z" fill="#bfc0c2"/></svg>
<svg class="ic" style="left:93px;top:245.9px" width="8" height="11" viewBox="0 0 8 12" ><rect x="2" y="0.5" width="4" height="10" fill="#d9d9d9" stroke="#222" stroke-width="0.7"/><rect x="0.5" y="9.5" width="7" height="2" fill="#bdbdbd" stroke="#222" stroke-width="0.7"/><rect x="3.4" y="2" width="1.2" height="6" fill="#777"/></svg>
<div class="t" style="left:105px;top:244.4px;font-size:11px;line-height:15.42px;white-space:nowrap">localhost:5432</div>
<div class="abs" style="left:81px;top:258.82px;width:160px;height:15.42px;background:#2a2d31"></div>
<svg class="ic" style="left:90.5px;top:264.32px" width="6" height="3.5" viewBox="0 0 6 3.5" ><path d="M0 0 H6 L3 3.5 Z" fill="#bfc0c2"/></svg>
<svg class="ic" style="left:99.5px;top:260.82px" width="11" height="12" viewBox="0 0 12 12" ><path d="M1 2.5 C1 0.5 11 0.5 11 2.5 V10 C11 12 1 12 1 10 Z" fill="#d8d8d8" stroke="#222" stroke-width="0.8"/><path d="M1 2.5 C1 4.3 11 4.3 11 2.5 M1 5.3 C1 7.1 11 7.1 11 5.3 M1 8 C1 9.8 11 9.8 11 8" stroke="#222" stroke-width="0.7" fill="none"/><ellipse cx="6" cy="2.4" rx="5" ry="1.3" fill="#9a9a9a"/></svg>
<div class="t" style="left:113.5px;top:259.82px;font-size:11px;line-height:15.42px;white-space:nowrap">postgres</div>
<div class="abs" style="left:81px;top:274.24px;width:160px;height:15.42px;background:#232629"></div>
<svg class="ic" style="left:107.5px;top:276.24px" width="11" height="11" viewBox="0 0 12 12" ><circle cx="3" cy="3" r="2.6" fill="#f08aa0" stroke="#222" stroke-width="0.5"/><circle cx="8.5" cy="8.5" r="2.6" fill="#4fc9ee" stroke="#222" stroke-width="0.5"/><path d="M7 1 H9 V4 M2 7 V10 H4" stroke="#eee" stroke-width="0.9" fill="none"/></svg>
<div class="t" style="left:121.5px;top:275.24px;font-size:10.3px;line-height:15.42px;white-space:nowrap"><i>Cast (0)</i></div>
<div class="abs" style="left:81px;top:289.66px;width:160px;height:15.42px;background:#2a2d31"></div>
<svg class="ic" style="left:107.5px;top:291.66px" width="11" height="11" viewBox="0 0 12 12" ><path d="M1 2.5 C1 0.5 11 0.5 11 2.5 V10 C11 12 1 12 1 10 Z" fill="#d8d8d8" stroke="#222" stroke-width="0.8"/><path d="M1 2.5 C1 4.3 11 4.3 11 2.5 M1 5.3 C1 7.1 11 7.1 11 5.3 M1 8 C1 9.8 11 9.8 11 8" stroke="#222" stroke-width="0.7" fill="none"/><ellipse cx="6" cy="2.4" rx="5" ry="1.3" fill="#9a9a9a"/><circle cx="9.5" cy="9.5" r="2.3" fill="#5fd86a" stroke="#222" stroke-width="0.6"/></svg>
<div class="t" style="left:121.5px;top:290.66px;font-size:10.3px;line-height:15.42px;white-space:nowrap"><i>Event Trigger (0)</i></div>
<div class="abs" style="left:81px;top:305.08px;width:160px;height:15.42px;background:#232629"></div>
<svg class="ic" style="left:107.5px;top:307.08px" width="11" height="11" viewBox="0 0 12 12" ><path d="M1 2.5 C1 0.5 11 0.5 11 2.5 V10 C11 12 1 12 1 10 Z" fill="#d8d8d8" stroke="#222" stroke-width="0.8"/><path d="M1 2.5 C1 4.3 11 4.3 11 2.5 M1 5.3 C1 7.1 11 7.1 11 5.3 M1 8 C1 9.8 11 9.8 11 8" stroke="#222" stroke-width="0.7" fill="none"/><ellipse cx="6" cy="2.4" rx="5" ry="1.3" fill="#9a9a9a"/><circle cx="9.5" cy="9.5" r="2.3" fill="#ddd" stroke="#222" stroke-width="0.6"/></svg>
<div class="t" style="left:121.5px;top:306.08px;font-size:10.3px;line-height:15.42px;white-space:nowrap"><i>Extension (0)</i></div>
<div class="abs" style="left:81px;top:320.5px;width:160px;height:15.42px;background:#2a2d31"></div>
<svg class="ic" style="left:107.5px;top:322.5px" width="11" height="11" viewBox="0 0 12 12" ><rect x="2" y="0.5" width="4" height="10" fill="#d9d9d9" stroke="#222" stroke-width="0.7"/><rect x="0.5" y="9.5" width="7" height="2" fill="#bdbdbd" stroke="#222" stroke-width="0.7"/><rect x="3.4" y="2" width="1.2" height="6" fill="#777"/><circle cx="8.5" cy="8.5" r="2.6" fill="#4fc9ee" stroke="#222" stroke-width="0.5"/></svg>
<div class="t" style="left:121.5px;top:321.5px;font-size:10.3px;line-height:15.42px;white-space:nowrap"><i>Foreign Server (0)</i></div>
<div class="abs" style="left:81px;top:335.92px;width:160px;height:15.42px;background:#232629"></div>
<svg class="ic" style="left:107.5px;top:337.92px" width="11" height="11" viewBox="0 0 12 12" ><circle cx="5.5" cy="5.5" r="5" fill="#4fc9ee" stroke="#222" stroke-width="0.6"/><path d="M2 3 C4 4 5 7 3 9 M6 1 C8 3 9 5 10 4" stroke="#45c64f" stroke-width="1.8" fill="none"/><rect x="6" y="6" width="5" height="5" fill="#aaa" stroke="#222" stroke-width="0.5"/></svg>
<div class="t" style="left:121.5px;top:336.92px;font-size:10.3px;line-height:15.42px;white-space:nowrap"><i>Foreign-data Wrapper (0)</i></div>
<div class="abs" style="left:81px;top:351.34px;width:160px;height:15.42px;background:#2a2d31"></div>
<svg class="ic" style="left:107.5px;top:353.34000000000003px" width="11" height="11" viewBox="0 0 12 12" ><path d="M1 0.5 H8 L10 2.5 V11 H1 Z" fill="#eee" stroke="#222" stroke-width="0.6"/><rect x="3" y="3" width="4" height="4" fill="#888"/><circle cx="8.5" cy="8.5" r="2.2" fill="#4fc9ee"/></svg>
<div class="t" style="left:121.5px;top:352.34px;font-size:10.3px;line-height:15.42px;white-space:nowrap"><i>Language (0)</i></div>
<div class="abs" style="left:81px;top:366.76px;width:160px;height:15.42px;background:#232629"></div>
<svg class="ic" style="left:99.5px;top:371.26px" width="3.5" height="6" viewBox="0 0 3.5 6" ><path d="M0 0 V6 L3.5 3 Z" fill="#bfc0c2"/></svg>
<svg class="ic" style="left:107.5px;top:368.76px" width="11" height="11" viewBox="0 0 12 12" ><circle cx="5.5" cy="3" r="2.6" fill="#f7d9a0" stroke="#222" stroke-width="0.6"/><path d="M0.5 11 C0.5 6 10.5 6 10.5 11 Z" fill="#3fc6ee" stroke="#222" stroke-width="0.6"/><path d="M2.5 2 H8.5" stroke="#c0392b" stroke-width="1.2"/></svg>
<div class="t" style="left:121.5px;top:367.76px;font-size:10.3px;line-height:15.42px;white-space:nowrap"><i>Role (6)</i></div>
<div class="abs" style="left:81px;top:382.18px;width:160px;height:15.42px;background:#2a2d31"></div>
<svg class="ic" style="left:99.5px;top:386.68px" width="3.5" height="6" viewBox="0 0 3.5 6" ><path d="M0 0 V6 L3.5 3 Z" fill="#bfc0c2"/></svg>
<svg class="ic" style="left:107.5px;top:384.18px" width="11" height="11" viewBox="0 0 12 12" ><rect x="0.5" y="1.5" width="11" height="9" fill="#f4e35a" stroke="#222" stroke-width="0.6"/><circle cx="4" cy="6" r="1.8" fill="#e84a5a"/><rect x="4" y="6.5" width="3" height="3" fill="#3fc6ee"/><path d="M7 9.5 L8.5 4 L10 9.5 Z" fill="#45c64f"/></svg>
<div class="t" style="left:121.5px;top:383.18px;font-size:10.3px;line-height:15.42px;white-space:nowrap"><i>Schema (1)</i></div>
<div class="abs" style="left:81px;top:397.6px;width:160px;height:15.42px;background:#232629"></div>
<svg class="ic" style="left:107.5px;top:399.6px" width="11" height="11" viewBox="0 0 12 12" ><rect x="0.5" y="0.5" width="11" height="11" rx="1" fill="#eee" stroke="#222" stroke-width="0.6"/><rect x="1" y="1" width="10" height="3" fill="#e84a5a"/><path d="M3 5 V11 M6 5 V11 M9 5 V11" stroke="#555" stroke-width="0.9"/></svg>
<div class="t" style="left:121.5px;top:398.6px;font-size:10.3px;line-height:15.42px;white-space:nowrap"><i>Tablespace (0)</i></div>
<div class="abs" style="left:81px;top:413.02px;width:160px;height:15.42px;background:#2a2d31"></div>
<svg class="ic" style="left:107.5px;top:415.02px" width="11" height="11" viewBox="0 0 12 12" ><rect x="0.5" y="0.5" width="4" height="4" fill="#f4e35a"/><rect x="5" y="0.5" width="4" height="4" fill="#45c64f"/><rect x="0.5" y="5" width="4" height="4" fill="#f08aa0"/><rect x="5.5" y="5.5" width="5.5" height="5.5" fill="#eee" stroke="#222" stroke-width="0.5"/></svg>
<div class="t" style="left:121.5px;top:414.02px;font-size:10.3px;line-height:15.42px;white-space:nowrap"><i>Transform (0)</i></div>
<div class="abs" style="left:81px;top:428.44px;width:160px;height:15.42px;background:#232629"></div>
<svg class="ic" style="left:107.5px;top:430.44px" width="11" height="11" viewBox="0 0 12 12" ><circle cx="4" cy="3" r="2.4" fill="#f7d9a0" stroke="#222" stroke-width="0.5"/><path d="M0.5 9 C0.5 5 7.5 5 7.5 9 Z" fill="#3fc6ee"/><rect x="5.5" y="5.5" width="5.5" height="5.5" fill="#eee" stroke="#222" stroke-width="0.5"/></svg>
<div class="t" style="left:121.5px;top:429.44px;font-size:10.3px;line-height:15.42px;white-space:nowrap"><i>User Mapping (0)</i></div>
<div class="abs" style="left:78px;top:581px;width:75px;height:20px;background:#45484c;border:1px solid #34373b;border-radius:2px"></div>
<svg class="ic" style="left:80px;top:584px" width="14" height="14" viewBox="0 0 14 14" ><rect x="0.5" y="0.5" width="13" height="13" rx="1" fill="#f4f4f4" stroke="#222" stroke-width="0.7"/><rect x="2" y="2" width="2.5" height="2.5" fill="#3fbfe8"/><rect x="2" y="5.8" width="2.5" height="2.5" fill="#3fbfe8"/><rect x="2" y="9.5" width="2.5" height="2.5" fill="#3fbfe8"/><rect x="5.5" y="2" width="6.5" height="2.5" fill="#aaa"/><rect x="5.5" y="5.8" width="6.5" height="2.5" fill="#bbb"/><rect x="5.5" y="9.5" width="6.5" height="2.5" fill="#999"/></svg>
<div class="t" style="left:93.5px;top:583px;font-size:11px;line-height:16px">Attributes</div>
<div class="abs" style="left:158px;top:581px;width:86px;height:20px;background:#45484c;border:1px solid #34373b;border-radius:2px"></div>
<svg class="ic" style="left:160.5px;top:583.5px" width="11" height="14" viewBox="0 0 11 14" ><path d="M0.5 0.5 H8 L10.5 3 V13.5 H0.5 Z" fill="#f4e35a" stroke="#222" stroke-width="0.7"/><text x="5.5" y="10" font-family="Liberation Sans" font-size="4" text-anchor="middle" fill="#333">SQL</text></svg>
<div class="t" style="left:173px;top:583px;font-size:11px;line-height:16px">Source code</div>
<div class="abs" style="left:72.5px;top:144.5px;width:175.5px;height:461px;border:1px solid #383b3f;border-bottom:none"></div>
<div class="t" style="left:251px;top:130.5px;font-size:11px">SQL execution</div>
<div class="abs" style="left:251.5px;top:144.5px;width:996px;height:461px;border:1px solid #383b3f;border-bottom:none"></div>
<div class="abs" style="left:254.5px;top:148px;width:74px;height:22px;background:#404347;border-radius:2px 2px 0 0"></div>
<div class="t" style="left:262.5px;top:150.5px;font-size:11px;line-height:16px">postgres</div>
<svg class="ic" style="left:309px;top:153.3px" width="11" height="11" viewBox="0 0 11 11" ><path d="M1.5 1.5 L9.5 9.5 M9.5 1.5 L1.5 9.5" stroke="#2a1a1c" stroke-width="3.6" stroke-linecap="round"/><path d="M1.5 1.5 L9.5 9.5 M9.5 1.5 L1.5 9.5" stroke="#f6909a" stroke-width="2.4" stroke-linecap="round"/></svg>
<div class="abs" style="left:1225.5px;top:148px;width:18.5px;height:18px;background:#45484c;border:1px solid #34373b;border-radius:2px"></div>
<svg class="ic" style="left:1228.5px;top:150.5px" width="13" height="14" viewBox="0 0 13 14" ><rect x="0.5" y="0.5" width="11" height="9" fill="#bfe8f5" stroke="#222" stroke-width="0.7"/><rect x="1" y="1" width="10" height="1.8" fill="#eee"/><path d="M4 4 L8 6 L4 8 Z" fill="#45c64f"/><circle cx="9.5" cy="10.5" r="3" fill="#45c64f" stroke="#222" stroke-width="0.6"/></svg>
<div class="abs" style="left:256px;top:170px;width:988px;height:431px;background:#404347"></div>
<svg class="ic" style="left:258.5px;top:176px" width="12" height="12" viewBox="0 0 12 12" ><path d="M0.8 0.5 L11.5 6 L0.8 11.5 Z" fill="#8ee88e" stroke="#2a6a3a" stroke-width="0.5"/><path d="M0.8 6 H11.5 L0.8 11.5 Z" fill="#4cc850"/></svg>
<div class="t" style="left:273px;top:175px;font-size:11px;line-height:16px;white-space:nowrap">Run</div>
<svg class="ic" style="left:309.5px;top:176px" width="11" height="12" viewBox="0 0 11 12" ><path d="M0.5 0.5 H8 L10.5 3 V11.5 H0.5 Z" fill="#f4e35a" stroke="#222" stroke-width="0.7"/><text x="4.5" y="6" font-family="Liberation Sans" font-size="4.5" text-anchor="middle" fill="#333">SQL</text><circle cx="8.5" cy="9.5" r="2" fill="#ddd" stroke="#333" stroke-width="0.6"/></svg>
<div class="t" style="left:323px;top:175px;font-size:11px;line-height:16px;white-space:nowrap"><u>S</u>cript</div>
<svg class="ic" style="left:357px;top:186.5px" width="6" height="3.5" viewBox="0 0 6 3.5" ><path d="M0 0 H6 L3 3.5 Z" fill="#cfd0d1"/></svg>
<svg class="ic" style="left:368.5px;top:175.5px" width="12" height="13" viewBox="0 0 12 13" ><circle cx="5" cy="5" r="4.6" fill="#4fc9ee" stroke="#222" stroke-width="0.7"/><path d="M2.5 3.5 H7.5 M5 3.5 V8" stroke="#f4f4f4" stroke-width="1.2"/><path d="M8 8 L11.5 12" stroke="#222" stroke-width="1.4"/></svg>
<div class="t" style="left:382px;top:175px;font-size:11px;line-height:16px;white-space:nowrap">Fi<u>n</u>d</div>
<svg class="ic" style="left:421px;top:175.5px" width="12" height="13" viewBox="0 0 12 13" ><path d="M0.5 0.5 H7 L9.5 3 V11 H0.5 Z" fill="#f4f4f4" stroke="#222" stroke-width="0.7"/><path d="M2 3 H7 M2 5 H7 M2 7 H6" stroke="#888" stroke-width="0.8"/><path d="M7 11 L10 8 L12 10 L9 13 Z" fill="#f08aa0" stroke="#222" stroke-width="0.5"/></svg>
<div class="t" style="left:434px;top:175px;font-size:11px;line-height:16px;white-space:nowrap">Clear all</div>
<svg class="ic" style="left:493px;top:175.5px" width="9" height="13" viewBox="0 0 9 13" ><path d="M0.5 0.5 H8.5 V12.5 L4.5 10.5 L0.5 12.5 Z" fill="#eee" stroke="#222" stroke-width="0.7"/><path d="M2 3 H7 M2 5 H7 M2 7 H7" stroke="#999" stroke-width="0.8"/></svg>
<div class="t" style="left:505px;top:175px;font-size:11px;line-height:16px;white-space:nowrap">Snippe<u>t</u>s</div>
<svg class="ic" style="left:552px;top:186.5px" width="6" height="3.5" viewBox="0 0 6 3.5" ><path d="M0 0 H6 L3 3.5 Z" fill="#cfd0d1"/></svg>
<svg class="ic" style="left:565.5px;top:175.5px" width="12" height="13" viewBox="0 0 12 13" ><path d="M0.5 0.5 H8 L10.5 3 V12.5 H0.5 Z" fill="#f4f4f4" stroke="#222" stroke-width="0.7"/><rect x="2" y="6" width="2" height="4" fill="#e84a5a"/><rect x="4.5" y="4" width="2" height="6" fill="#3fc6ee"/><path d="M7 10 L11.5 10 M9.5 8 L11.5 10 L9.5 12" stroke="#45c64f" stroke-width="1" fill="none"/></svg>
<div class="t" style="left:579px;top:175px;font-size:11px;line-height:16px;white-space:nowrap">E<u>x</u>port</div>
<div class="abs" style="left:626.5px;top:172.5px;width:51.5px;height:20px;background:#404347;border:1px solid #373a3e;border-radius:2px"></div>
<svg class="ic" style="left:628.5px;top:175.5px" width="11" height="13" viewBox="0 0 11 13" ><path d="M0.5 2 C0.5 -0.5 10.5 -0.5 10.5 2 L6.5 7 V12.5 H4.5 V7 Z" fill="#f1d24a" stroke="#222" stroke-width="0.7"/><ellipse cx="5.5" cy="2" rx="4.6" ry="1.3" fill="#c8a02a"/></svg>
<div class="t" style="left:642px;top:175px;font-size:11px;line-height:16px;white-space:nowrap">F<u>i</u>lter</div>
<div class="abs" style="left:682.5px;top:172.5px;width:62.0px;height:20px;background:#404347;border:1px solid #373a3e;border-radius:2px"></div>
<svg class="ic" style="left:684px;top:176px" width="13" height="12" viewBox="0 0 13 12" ><rect x="0.5" y="0.5" width="12" height="11" fill="#3fbfe8" stroke="#222" stroke-width="0.7"/><rect x="3" y="2.5" width="7" height="7" rx="3.5" fill="#f4e35a" stroke="#222" stroke-width="0.5"/><path d="M6.5 4 V8" stroke="#222" stroke-width="1"/></svg>
<div class="t" style="left:698px;top:175px;font-size:11px;line-height:16px;white-space:nowrap"><u>O</u>utput</div>
<svg class="ic" style="left:1105px;top:175.5px" width="13" height="14" viewBox="0 0 13 14" ><path d="M0.8 2.4800000000000004 A5.5 1.6800000000000002 0 0 1 11.8 2.4800000000000004 V11.120000000000001 A5.5 1.6800000000000002 0 0 1 0.8 11.120000000000001 Z" fill="#e4e4e4" stroke="#151515" stroke-width="0.9"/><ellipse cx="6.3" cy="2.4800000000000004" rx="5.2" ry="1.4800000000000002" fill="#8e8e8e"/><path d="M0.8 4.352000000000001 A5.5 1.6800000000000002 0 0 0 11.8 4.352000000000001" fill="none" stroke="#151515" stroke-width="0.81"/><path d="M0.8 7.232000000000002 A5.5 1.6800000000000002 0 0 0 11.8 7.232000000000002" fill="none" stroke="#151515" stroke-width="0.81"/></svg>
<div class="t" style="right:7px;top:175.3px;font-size:10.5px;line-height:16px"><b>postgres</b><i>@localhost:5432</i></div>
<div class="abs" style="left:258px;top:198px;width:983.6px;height:99px;background:#232629"></div>
<div class="abs" style="left:745px;top:297.5px;width:10px;height:1px;background:#5a5d61"></div>
<div class="abs" style="left:258px;top:198px;width:12.5px;height:99px;background:#393c40"></div>
<div class="mono" style="left:261px;top:200.5px;line-height:14px;color:#d8d9da">1</div>
<div class="mono" style="left:261px;top:214.5px;line-height:14px;color:#eff0f1">2</div>
<div class="abs" style="left:272px;top:214px;width:968px;height:14px;background:#014b6e"></div>
<div class="mono" style="left:272.5px;top:200.5px;line-height:14px;white-space:pre"><span style="color:#8b8bd6">select</span> <span style="color:#f4f4f4">*</span> <span style="color:#8b8bd6">from</span> <span style="color:#3fa9de;font-style:italic">pg_class</span><span style="color:#f4f4f4">;</span></div>
<div class="abs" style="left:258px;top:301px;width:983.3px;height:274px;background:#3c3f43;border-top:1px solid #46494d"></div>
<div class="abs" style="left:260px;top:303px;width:108.5px;height:17.5px;background:#45484c;border:1px solid #34373b;border-radius:2px"></div>
<div class="t" style="left:262px;top:304px;font-size:11px;line-height:16px">oid</div>
<svg class="ic" style="left:357px;top:311px" width="6" height="3.5" viewBox="0 0 6 3.5" ><path d="M0 0 H6 L3 3.5 Z" fill="#cfd0d1"/></svg>
<div class="abs" style="left:373px;top:303px;width:282px;height:17.5px;background:#232629;border-radius:2px"></div>
<div class="abs" style="left:659.7px;top:307.3px;width:9.5px;height:9.7px;background:#232629;border:1px solid #34373b"></div>
<div class="t" style="left:673px;top:304px;font-size:10.6px;line-height:16px;white-space:nowrap">Case sensitive</div>
<div class="abs" style="left:748px;top:307.3px;width:9.5px;height:9.7px;background:#232629;border:1px solid #34373b"></div>
<div class="t" style="left:761px;top:304px;font-size:10.6px;line-height:16px;white-space:nowrap">Regular expression</div>
<div class="abs" style="left:862px;top:307.3px;width:9.5px;height:9.7px;background:#232629;border:1px solid #34373b"></div>
<div class="t" style="left:875px;top:304px;font-size:10.6px;line-height:16px;white-space:nowrap">Exact match</div>
<svg class="ic" style="left:1225.7px;top:306.5px" width="11" height="11" viewBox="0 0 11 11" ><path d="M1.5 1.5 L9.5 9.5 M9.5 1.5 L1.5 9.5" stroke="#2a1a1c" stroke-width="3.6" stroke-linecap="round"/><path d="M1.5 1.5 L9.5 9.5 M9.5 1.5 L1.5 9.5" stroke="#f6909a" stroke-width="2.4" stroke-linecap="round"/></svg>
<div class="abs" style="left:260px;top:326px;width:970px;height:15.7px;background:#383b3f"></div>
<div class="abs" style="left:280px;top:326px;width:1px;height:15.7px;background:#45484c"></div>
<div class="t" style="left:282px;top:326.8px;font-size:10.8px;line-height:15.7px;width:60.6px;overflow:hidden;white-space:nowrap">oid</div>
<div class="abs" style="left:342.6px;top:326px;width:1px;height:15.7px;background:#45484c"></div>
<div class="t" style="left:344.6px;top:326.8px;font-size:10.8px;line-height:15.7px;width:240.4px;overflow:hidden;white-space:nowrap">relname</div>
<div class="abs" style="left:585px;top:326px;width:1px;height:15.7px;background:#45484c"></div>
<div class="t" style="left:587px;top:326.8px;font-size:10.8px;line-height:15.7px;width:72.3px;overflow:hidden;white-space:nowrap">relnamespace</div>
<div class="abs" style="left:659.3px;top:326px;width:1px;height:15.7px;background:#45484c"></div>
<div class="t" style="left:661.3px;top:326.8px;font-size:10.8px;line-height:15.7px;width:38.1px;overflow:hidden;white-space:nowrap">reltype</div>
<div class="abs" style="left:699.4px;top:326px;width:1px;height:15.7px;background:#45484c"></div>
<div class="t" style="left:701.4px;top:326.8px;font-size:10.8px;line-height:15.7px;width:47.8px;overflow:hidden;white-space:nowrap">reloftype</div>
<div class="abs" style="left:749.2px;top:326px;width:1px;height:15.7px;background:#45484c"></div>
<div class="t" style="left:751.2px;top:326.8px;font-size:10.8px;line-height:15.7px;width:47.5px;overflow:hidden;white-space:nowrap">relowner</div>
<div class="abs" style="left:798.7px;top:326px;width:1px;height:15.7px;background:#45484c"></div>
<div class="t" style="left:800.7px;top:326.8px;font-size:10.8px;line-height:15.7px;width:30.5px;overflow:hidden;white-space:nowrap">relam</div>
<div class="abs" style="left:831.2px;top:326px;width:1px;height:15.7px;background:#45484c"></div>
<div class="t" style="left:833.2px;top:326.8px;font-size:10.8px;line-height:15.7px;width:56.5px;overflow:hidden;white-space:nowrap">relfilenode</div>
<div class="abs" style="left:889.7px;top:326px;width:1px;height:15.7px;background:#45484c"></div>
<div class="t" style="left:891.7px;top:326.8px;font-size:10.8px;line-height:15.7px;width:71.3px;overflow:hidden;white-space:nowrap">reltablespace</div>
<div class="abs" style="left:963px;top:326px;width:1px;height:15.7px;background:#45484c"></div>
<div class="t" style="left:965px;top:326.8px;font-size:10.8px;line-height:15.7px;width:45.0px;overflow:hidden;white-space:nowrap">relpages</div>
<div class="abs" style="left:1010px;top:326px;width:1px;height:15.7px;background:#45484c"></div>
<div class="t" style="left:1012px;top:326.8px;font-size:10.8px;line-height:15.7px;width:47.0px;overflow:hidden;white-space:nowrap">reltuples</div>
<div class="abs" style="left:1059px;top:326px;width:1px;height:15.7px;background:#45484c"></div>
<div class="t" style="left:1061px;top:326.8px;font-size:10.8px;line-height:15.7px;width:61.3px;overflow:hidden;white-space:nowrap">relallvisible</div>
<div class="abs" style="left:1122.3px;top:326px;width:1px;height:15.7px;background:#45484c"></div>
<div class="t" style="left:1124.3px;top:326.8px;font-size:10.8px;line-height:15.7px;width:65.3px;overflow:hidden;white-space:nowrap">reltoastrelid</div>
<div class="abs" style="left:1189.6px;top:326px;width:1px;height:15.7px;background:#45484c"></div>
<div class="t" style="left:1191.6px;top:326.8px;font-size:10.8px;line-height:15.7px;width:38.4px;overflow:hidden;white-space:nowrap">relhasindex</div>
<div class="abs" style="left:260px;top:341.7px;width:970px;height:223.30px;overflow:hidden">
<div class="abs" style="left:0;top:0.00px;width:970px;height:12.47px;background:#1f2225"></div>
<div class="abs" style="left:0;top:12.47px;width:970px;height:12.47px;background:#2b2e32"></div>
<div class="abs" style="left:0;top:24.94px;width:970px;height:12.47px;background:#1f2225"></div>
<div class="abs" style="left:0;top:37.41px;width:970px;height:12.47px;background:#2b2e32"></div>
<div class="abs" style="left:0;top:49.88px;width:970px;height:12.47px;background:#1f2225"></div>
<div class="abs" style="left:0;top:62.35px;width:970px;height:12.47px;background:#2b2e32"></div>
<div class="abs" style="left:0;top:74.82px;width:970px;height:12.47px;background:#1f2225"></div>
<div class="abs" style="left:0;top:87.29px;width:970px;height:12.47px;background:#2b2e32"></div>
<div class="abs" style="left:0;top:99.76px;width:970px;height:12.47px;background:#1f2225"></div>
<div class="abs" style="left:0;top:112.23px;width:970px;height:12.47px;background:#2b2e32"></div>
<div class="abs" style="left:0;top:124.70px;width:970px;height:12.47px;background:#1f2225"></div>
<div class="abs" style="left:0;top:137.17px;width:970px;height:12.47px;background:#2b2e32"></div>
<div class="abs" style="left:0;top:149.64px;width:970px;height:12.47px;background:#1f2225"></div>
<div class="abs" style="left:0;top:162.11px;width:970px;height:12.47px;background:#2b2e32"></div>
<div class="abs" style="left:0;top:174.58px;width:970px;height:12.47px;background:#1f2225"></div>
<div class="abs" style="left:0;top:187.05px;width:970px;height:12.47px;background:#2b2e32"></div>
<div class="abs" style="left:0;top:199.52px;width:970px;height:12.47px;background:#1f2225"></div>
<div class="abs" style="left:0;top:211.99px;width:970px;height:12.47px;background:#2b2e32"></div>
<div class="abs" style="left:0;top:0;width:20px;height:240px;background:#35383c"></div>
<div class="abs" style="left:0;top:11.97px;width:20px;height:1px;background:#44474b"></div>
<div class="abs" style="left:0;top:24.44px;width:20px;height:1px;background:#44474b"></div>
<div class="abs" style="left:0;top:36.91px;width:20px;height:1px;background:#44474b"></div>
<div class="abs" style="left:0;top:49.38px;width:20px;height:1px;background:#44474b"></div>
<div class="abs" style="left:0;top:61.85px;width:20px;height:1px;background:#44474b"></div>
<div class="abs" style="left:0;top:74.32px;width:20px;height:1px;background:#44474b"></div>
<div class="abs" style="left:0;top:86.79px;width:20px;height:1px;background:#44474b"></div>
<div class="abs" style="left:0;top:99.26px;width:20px;height:1px;background:#44474b"></div>
<div class="abs" style="left:0;top:111.73px;width:20px;height:1px;background:#44474b"></div>
<div class="abs" style="left:0;top:124.20px;width:20px;height:1px;background:#44474b"></div>
<div class="abs" style="left:0;top:136.67px;width:20px;height:1px;background:#44474b"></div>
<div class="abs" style="left:0;top:149.14px;width:20px;height:1px;background:#44474b"></div>
<div class="abs" style="left:0;top:161.61px;width:20px;height:1px;background:#44474b"></div>
<div class="abs" style="left:0;top:174.08px;width:20px;height:1px;background:#44474b"></div>
<div class="abs" style="left:0;top:186.55px;width:20px;height:1px;background:#44474b"></div>
<div class="abs" style="left:0;top:199.02px;width:20px;height:1px;background:#44474b"></div>
<div class="abs" style="left:0;top:211.49px;width:20px;height:1px;background:#44474b"></div>
<div class="abs" style="left:0;top:223.96px;width:20px;height:1px;background:#44474b"></div>
<div class="c" style="left:2px;top:1.00px">1</div>
<div class="c" style="left:22.0px;top:1.00px">194512</div>
<div class="c" style="left:84.6px;top:1.00px">pg_subscription_subname_index</div>
<div class="c" style="left:327.0px;top:1.00px">2200</div>
<div class="c" style="left:401.3px;top:1.00px">194514</div>
<div class="c" style="left:441.4px;top:1.00px">0</div>
<div class="c" style="left:491.2px;top:1.00px">10</div>
<div class="c" style="left:540.7px;top:1.00px">2</div>
<div class="c" style="left:573.2px;top:1.00px">194512</div>
<div class="c" style="left:631.7px;top:1.00px">0</div>
<div class="c" style="left:705.0px;top:1.00px">0</div>
<div class="c" style="left:752.0px;top:1.00px">0</div>
<div class="c" style="left:801.0px;top:1.00px">0</div>
<div class="c" style="left:864.3px;top:1.00px">0</div>
<div class="c" style="left:931.6px;top:1.00px">t</div>
<div class="c" style="left:2px;top:13.47px">2</div>
<div class="c" style="left:22.0px;top:13.47px">194433</div>
<div class="c" style="left:84.6px;top:13.47px">pg_subscription_rel_srrelid_srsubid_index</div>
<div class="c" style="left:327.0px;top:13.47px">99</div>
<div class="c" style="left:401.3px;top:13.47px">194434</div>
<div class="c" style="left:441.4px;top:13.47px">0</div>
<div class="c" style="left:491.2px;top:13.47px">10</div>
<div class="c" style="left:540.7px;top:13.47px">2</div>
<div class="c" style="left:573.2px;top:13.47px">194433</div>
<div class="c" style="left:631.7px;top:13.47px">0</div>
<div class="c" style="left:705.0px;top:13.47px">0</div>
<div class="c" style="left:752.0px;top:13.47px">0</div>
<div class="c" style="left:801.0px;top:13.47px">0</div>
<div class="c" style="left:864.3px;top:13.47px">0</div>
<div class="c" style="left:931.6px;top:13.47px">t</div>
<div class="c" style="left:2px;top:25.94px">3</div>
<div class="c" style="left:22.0px;top:25.94px">194435</div>
<div class="c" style="left:84.6px;top:25.94px">pg_authid</div>
<div class="c" style="left:327.0px;top:25.94px">99</div>
<div class="c" style="left:401.3px;top:25.94px">0</div>
<div class="c" style="left:441.4px;top:25.94px">0</div>
<div class="c" style="left:491.2px;top:25.94px">10</div>
<div class="c" style="left:540.7px;top:25.94px">403</div>
<div class="c" style="left:573.2px;top:25.94px">194435</div>
<div class="c" style="left:631.7px;top:25.94px">0</div>
<div class="c" style="left:705.0px;top:25.94px">1</div>
<div class="c" style="left:752.0px;top:25.94px">0</div>
<div class="c" style="left:801.0px;top:25.94px">0</div>
<div class="c" style="left:864.3px;top:25.94px">0</div>
<div class="c" style="left:931.6px;top:25.94px">f</div>
<div class="c" style="left:2px;top:38.41px">4</div>
<div class="c" style="left:22.0px;top:38.41px">194438</div>
<div class="c" style="left:84.6px;top:38.41px">pg_available_extension_versions</div>
<div class="c" style="left:327.0px;top:38.41px">2200</div>
<div class="c" style="left:401.3px;top:38.41px">194440</div>
<div class="c" style="left:441.4px;top:38.41px">0</div>
<div class="c" style="left:491.2px;top:38.41px">10</div>
<div class="c" style="left:540.7px;top:38.41px">2</div>
<div class="c" style="left:573.2px;top:38.41px">194438</div>
<div class="c" style="left:631.7px;top:38.41px">0</div>
<div class="c" style="left:705.0px;top:38.41px">1</div>
<div class="c" style="left:752.0px;top:38.41px">89</div>
<div class="c" style="left:801.0px;top:38.41px">0</div>
<div class="c" style="left:864.3px;top:38.41px">0</div>
<div class="c" style="left:931.6px;top:38.41px">t</div>
<div class="c" style="left:2px;top:50.88px">5</div>
<div class="c" style="left:22.0px;top:50.88px">194436</div>
<div class="c" style="left:84.6px;top:50.88px">pg_shadow</div>
<div class="c" style="left:327.0px;top:50.88px">2200</div>
<div class="c" style="left:401.3px;top:50.88px">194437</div>
<div class="c" style="left:441.4px;top:50.88px">0</div>
<div class="c" style="left:491.2px;top:50.88px">10</div>
<div class="c" style="left:540.7px;top:50.88px">0</div>
<div class="c" style="left:573.2px;top:50.88px">194436</div>
<div class="c" style="left:631.7px;top:50.88px">0</div>
<div class="c" style="left:705.0px;top:50.88px">1</div>
<div class="c" style="left:752.0px;top:50.88px">1</div>
<div class="c" style="left:801.0px;top:50.88px">0</div>
<div class="c" style="left:864.3px;top:50.88px">0</div>
<div class="c" style="left:931.6px;top:50.88px">f</div>
<div class="c" style="left:2px;top:63.35px">6</div>
<div class="c" style="left:22.0px;top:63.35px">194448</div>
<div class="c" style="left:84.6px;top:63.35px">pg_stat_replication</div>
<div class="c" style="left:327.0px;top:63.35px">99</div>
<div class="c" style="left:401.3px;top:63.35px">194449</div>
<div class="c" style="left:441.4px;top:63.35px">0</div>
<div class="c" style="left:491.2px;top:63.35px">10</div>
<div class="c" style="left:540.7px;top:63.35px">2</div>
<div class="c" style="left:573.2px;top:63.35px">194448</div>
<div class="c" style="left:631.7px;top:63.35px">0</div>
<div class="c" style="left:705.0px;top:63.35px">0</div>
<div class="c" style="left:752.0px;top:63.35px">0</div>
<div class="c" style="left:801.0px;top:63.35px">0</div>
<div class="c" style="left:864.3px;top:63.35px">0</div>
<div class="c" style="left:931.6px;top:63.35px">t</div>
<div class="c" style="left:2px;top:75.82px">7</div>
<div class="c" style="left:22.0px;top:75.82px">194450</div>
<div class="c" style="left:84.6px;top:75.82px">pg_stat_database</div>
<div class="c" style="left:327.0px;top:75.82px">99</div>
<div class="c" style="left:401.3px;top:75.82px">0</div>
<div class="c" style="left:441.4px;top:75.82px">0</div>
<div class="c" style="left:491.2px;top:75.82px">10</div>
<div class="c" style="left:540.7px;top:75.82px">403</div>
<div class="c" style="left:573.2px;top:75.82px">194450</div>
<div class="c" style="left:631.7px;top:75.82px">0</div>
<div class="c" style="left:705.0px;top:75.82px">1</div>
<div class="c" style="left:752.0px;top:75.82px">0</div>
<div class="c" style="left:801.0px;top:75.82px">0</div>
<div class="c" style="left:864.3px;top:75.82px">0</div>
<div class="c" style="left:931.6px;top:75.82px">f</div>
<div class="c" style="left:2px;top:88.29px">8</div>
<div class="c" style="left:22.0px;top:88.29px">194466</div>
<div class="c" style="left:84.6px;top:88.29px">pg_available_extensions</div>
<div class="c" style="left:327.0px;top:88.29px">2200</div>
<div class="c" style="left:401.3px;top:88.29px">194468</div>
<div class="c" style="left:441.4px;top:88.29px">0</div>
<div class="c" style="left:491.2px;top:88.29px">10</div>
<div class="c" style="left:540.7px;top:88.29px">2</div>
<div class="c" style="left:573.2px;top:88.29px">194466</div>
<div class="c" style="left:631.7px;top:88.29px">0</div>
<div class="c" style="left:705.0px;top:88.29px">2</div>
<div class="c" style="left:752.0px;top:88.29px">241</div>
<div class="c" style="left:801.0px;top:88.29px">0</div>
<div class="c" style="left:864.3px;top:88.29px">0</div>
<div class="c" style="left:931.6px;top:88.29px">t</div>
<div class="c" style="left:2px;top:100.76px">9</div>
<div class="c" style="left:22.0px;top:100.76px">194451</div>
<div class="c" style="left:84.6px;top:100.76px">pg_locks</div>
<div class="c" style="left:327.0px;top:100.76px">2200</div>
<div class="c" style="left:401.3px;top:100.76px">194452</div>
<div class="c" style="left:441.4px;top:100.76px">0</div>
<div class="c" style="left:491.2px;top:100.76px">10</div>
<div class="c" style="left:540.7px;top:100.76px">0</div>
<div class="c" style="left:573.2px;top:100.76px">194451</div>
<div class="c" style="left:631.7px;top:100.76px">0</div>
<div class="c" style="left:705.0px;top:100.76px">1</div>
<div class="c" style="left:752.0px;top:100.76px">1</div>
<div class="c" style="left:801.0px;top:100.76px">0</div>
<div class="c" style="left:864.3px;top:100.76px">0</div>
<div class="c" style="left:931.6px;top:100.76px">f</div>
<div class="c" style="left:2px;top:113.23px">10</div>
<div class="c" style="left:22.0px;top:113.23px">194461</div>
<div class="c" style="left:84.6px;top:113.23px">pg_replication_slots</div>
<div class="c" style="left:327.0px;top:113.23px">99</div>
<div class="c" style="left:401.3px;top:113.23px">194462</div>
<div class="c" style="left:441.4px;top:113.23px">0</div>
<div class="c" style="left:491.2px;top:113.23px">10</div>
<div class="c" style="left:540.7px;top:113.23px">2</div>
<div class="c" style="left:573.2px;top:113.23px">194461</div>
<div class="c" style="left:631.7px;top:113.23px">0</div>
<div class="c" style="left:705.0px;top:113.23px">0</div>
<div class="c" style="left:752.0px;top:113.23px">0</div>
<div class="c" style="left:801.0px;top:113.23px">0</div>
<div class="c" style="left:864.3px;top:113.23px">0</div>
<div class="c" style="left:931.6px;top:113.23px">t</div>
<div class="c" style="left:2px;top:125.70px">11</div>
<div class="c" style="left:22.0px;top:125.70px">194463</div>
<div class="c" style="left:84.6px;top:125.70px">pg_stat_activity</div>
<div class="c" style="left:327.0px;top:125.70px">99</div>
<div class="c" style="left:401.3px;top:125.70px">0</div>
<div class="c" style="left:441.4px;top:125.70px">0</div>
<div class="c" style="left:491.2px;top:125.70px">10</div>
<div class="c" style="left:540.7px;top:125.70px">403</div>
<div class="c" style="left:573.2px;top:125.70px">194463</div>
<div class="c" style="left:631.7px;top:125.70px">0</div>
<div class="c" style="left:705.0px;top:125.70px">1</div>
<div class="c" style="left:752.0px;top:125.70px">0</div>
<div class="c" style="left:801.0px;top:125.70px">0</div>
<div class="c" style="left:864.3px;top:125.70px">0</div>
<div class="c" style="left:931.6px;top:125.70px">f</div>
<div class="c" style="left:2px;top:138.17px">12</div>
<div class="c" style="left:22.0px;top:138.17px">194441</div>
<div class="c" style="left:84.6px;top:138.17px">pg_publication_tables</div>
<div class="c" style="left:327.0px;top:138.17px">2200</div>
<div class="c" style="left:401.3px;top:138.17px">194443</div>
<div class="c" style="left:441.4px;top:138.17px">0</div>
<div class="c" style="left:491.2px;top:138.17px">10</div>
<div class="c" style="left:540.7px;top:138.17px">2</div>
<div class="c" style="left:573.2px;top:138.17px">194441</div>
<div class="c" style="left:631.7px;top:138.17px">0</div>
<div class="c" style="left:705.0px;top:138.17px">1</div>
<div class="c" style="left:752.0px;top:138.17px">2</div>
<div class="c" style="left:801.0px;top:138.17px">0</div>
<div class="c" style="left:864.3px;top:138.17px">194448</div>
<div class="c" style="left:931.6px;top:138.17px">t</div>
<div class="c" style="left:2px;top:150.64px">13</div>
<div class="c" style="left:22.0px;top:150.64px">194464</div>
<div class="c" style="left:84.6px;top:150.64px">pg_stats_ext</div>
<div class="c" style="left:327.0px;top:150.64px">2200</div>
<div class="c" style="left:401.3px;top:150.64px">194465</div>
<div class="c" style="left:441.4px;top:150.64px">0</div>
<div class="c" style="left:491.2px;top:150.64px">10</div>
<div class="c" style="left:540.7px;top:150.64px">0</div>
<div class="c" style="left:573.2px;top:150.64px">194464</div>
<div class="c" style="left:631.7px;top:150.64px">0</div>
<div class="c" style="left:705.0px;top:150.64px">1</div>
<div class="c" style="left:752.0px;top:150.64px">1</div>
<div class="c" style="left:801.0px;top:150.64px">0</div>
<div class="c" style="left:864.3px;top:150.64px">0</div>
<div class="c" style="left:931.6px;top:150.64px">f</div>
<div class="c" style="left:2px;top:163.11px">14</div>
<div class="c" style="left:22.0px;top:163.11px">194469</div>
<div class="c" style="left:84.6px;top:163.11px">pg_statio_user_sequences</div>
<div class="c" style="left:327.0px;top:163.11px">2200</div>
<div class="c" style="left:401.3px;top:163.11px">194470</div>
<div class="c" style="left:441.4px;top:163.11px">0</div>
<div class="c" style="left:491.2px;top:163.11px">10</div>
<div class="c" style="left:540.7px;top:163.11px">0</div>
<div class="c" style="left:573.2px;top:163.11px">194469</div>
<div class="c" style="left:631.7px;top:163.11px">0</div>
<div class="c" style="left:705.0px;top:163.11px">1</div>
<div class="c" style="left:752.0px;top:163.11px">1</div>
<div class="c" style="left:801.0px;top:163.11px">0</div>
<div class="c" style="left:864.3px;top:163.11px">0</div>
<div class="c" style="left:931.6px;top:163.11px">f</div>
<div class="c" style="left:2px;top:175.58px">15</div>
<div class="c" style="left:22.0px;top:175.58px">194478</div>
<div class="c" style="left:84.6px;top:175.58px">pg_statio_sys_sequences</div>
<div class="c" style="left:327.0px;top:175.58px">99</div>
<div class="c" style="left:401.3px;top:175.58px">194479</div>
<div class="c" style="left:441.4px;top:175.58px">0</div>
<div class="c" style="left:491.2px;top:175.58px">10</div>
<div class="c" style="left:540.7px;top:175.58px">2</div>
<div class="c" style="left:573.2px;top:175.58px">194478</div>
<div class="c" style="left:631.7px;top:175.58px">0</div>
<div class="c" style="left:705.0px;top:175.58px">0</div>
<div class="c" style="left:752.0px;top:175.58px">0</div>
<div class="c" style="left:801.0px;top:175.58px">0</div>
<div class="c" style="left:864.3px;top:175.58px">0</div>
<div class="c" style="left:931.6px;top:175.58px">t</div>
<div class="c" style="left:2px;top:188.05px">16</div>
<div class="c" style="left:22.0px;top:188.05px">194480</div>
<div class="c" style="left:84.6px;top:188.05px">pg_stats</div>
<div class="c" style="left:327.0px;top:188.05px">99</div>
<div class="c" style="left:401.3px;top:188.05px">0</div>
<div class="c" style="left:441.4px;top:188.05px">0</div>
<div class="c" style="left:491.2px;top:188.05px">10</div>
<div class="c" style="left:540.7px;top:188.05px">403</div>
<div class="c" style="left:573.2px;top:188.05px">194480</div>
<div class="c" style="left:631.7px;top:188.05px">0</div>
<div class="c" style="left:705.0px;top:188.05px">1</div>
<div class="c" style="left:752.0px;top:188.05px">0</div>
<div class="c" style="left:801.0px;top:188.05px">0</div>
<div class="c" style="left:864.3px;top:188.05px">0</div>
<div class="c" style="left:931.6px;top:188.05px">f</div>
<div class="c" style="left:2px;top:200.52px">17</div>
<div class="c" style="left:22.0px;top:200.52px">194518</div>
<div class="c" style="left:84.6px;top:200.52px">pg_sequences</div>
<div class="c" style="left:327.0px;top:200.52px">2200</div>
<div class="c" style="left:401.3px;top:200.52px">194520</div>
<div class="c" style="left:441.4px;top:200.52px">0</div>
<div class="c" style="left:491.2px;top:200.52px">10</div>
<div class="c" style="left:540.7px;top:200.52px">2</div>
<div class="c" style="left:573.2px;top:200.52px">194518</div>
<div class="c" style="left:631.7px;top:200.52px">0</div>
<div class="c" style="left:705.0px;top:200.52px">7</div>
<div class="c" style="left:752.0px;top:200.52px">503</div>
<div class="c" style="left:801.0px;top:200.52px">0</div>
<div class="c" style="left:864.3px;top:200.52px">0</div>
<div class="c" style="left:931.6px;top:200.52px">t</div>
<div class="c" style="left:2px;top:212.99px">18</div>
<div class="c" style="left:22.0px;top:212.99px">194481</div>
<div class="c" style="left:84.6px;top:212.99px">pg_indexes</div>
<div class="c" style="left:327.0px;top:212.99px">2200</div>
<div class="c" style="left:401.3px;top:212.99px">194482</div>
<div class="c" style="left:441.4px;top:212.99px">0</div>
<div class="c" style="left:491.2px;top:212.99px">10</div>
<div class="c" style="left:540.7px;top:212.99px">0</div>
<div class="c" style="left:573.2px;top:212.99px">194481</div>
<div class="c" style="left:631.7px;top:212.99px">0</div>
<div class="c" style="left:705.0px;top:212.99px">1</div>
<div class="c" style="left:752.0px;top:212.99px">1</div>
<div class="c" style="left:801.0px;top:212.99px">0</div>
<div class="c" style="left:864.3px;top:212.99px">0</div>
<div class="c" style="left:931.6px;top:212.99px">f</div>
</div>
<div class="abs" style="left:1230px;top:326px;width:9px;height:15.7px;background:#3a3d41"></div>
<svg class="ic" style="left:1231.5px;top:328.5px" width="6" height="3.5" viewBox="0 0 6 3.5" ><path d="M0 3.5 H6 L3 0 Z" fill="#cfd0d1"/></svg>
<div class="abs" style="left:1230px;top:341.7px;width:9px;height:223.3px;background:#35383c"></div>
<div class="abs" style="left:1230px;top:341.5px;width:9px;height:11px;background:#3c3f43;border:1px solid #34373b"></div>
<div class="abs" style="left:1230px;top:555px;width:9px;height:10px;background:#3a3d41"></div>
<svg class="ic" style="left:1231.5px;top:558px" width="6" height="3.5" viewBox="0 0 6 3.5" ><path d="M0 0 H6 L3 3.5 Z" fill="#cfd0d1"/></svg>
<div class="abs" style="left:260px;top:565px;width:970px;height:9.5px;background:#35383c"></div>
<div class="abs" style="left:260px;top:565px;width:10px;height:9.8px;background:#404347;border:1px solid #36393d"></div>
<svg class="ic" style="left:262.5px;top:567px" width="3.5" height="6" viewBox="0 0 3.5 6" ><path d="M3.5 0 V6 L0 3 Z" fill="#cfd0d1"/></svg>
<div class="abs" style="left:270px;top:565px;width:298px;height:9.5px;background:#3c3f43;border:1px solid #34373b"></div>
<div class="abs" style="left:1220px;top:565px;width:9.5px;height:9.8px;background:#404347;border:1px solid #36393d"></div>
<svg class="ic" style="left:1223.5px;top:567px" width="3.5" height="6" viewBox="0 0 3.5 6" ><path d="M0 0 V6 L3.5 3 Z" fill="#cfd0d1"/></svg>
<div class="abs" style="left:258px;top:577px;width:983.3px;height:24px;background:#404347"></div>
<div class="abs" style="left:258.5px;top:324.5px;width:983px;height:252.5px;border:1px solid #4b4e52"></div>
<div class="abs" style="left:1230px;top:565px;width:9.3px;height:10px;background:#35383c"></div>
<div class="abs" style="left:259.5px;top:575px;width:981px;height:1.5px;background:#3c3f43"></div>
<div class="abs" style="left:258px;top:576px;width:78.5px;height:22px;background:#3a3d41;border:1px solid #35383b"></div>
<div class="t" style="left:265.5px;top:578.5px;font-size:10.5px;line-height:16px">Results (503)</div>
<div class="abs" style="left:337px;top:576px;width:78px;height:20px;background:#404347;border:1px solid #35383b"></div>
<div class="t" style="left:344px;top:578.5px;font-size:10.5px;line-height:16px">Messages (1)</div>
<div class="abs" style="left:416px;top:576px;width:51px;height:20px;background:#404347;border:1px solid #35383b"></div>
<div class="t" style="left:424px;top:578.5px;font-size:10.5px;line-height:16px">History</div>
</body></html>
